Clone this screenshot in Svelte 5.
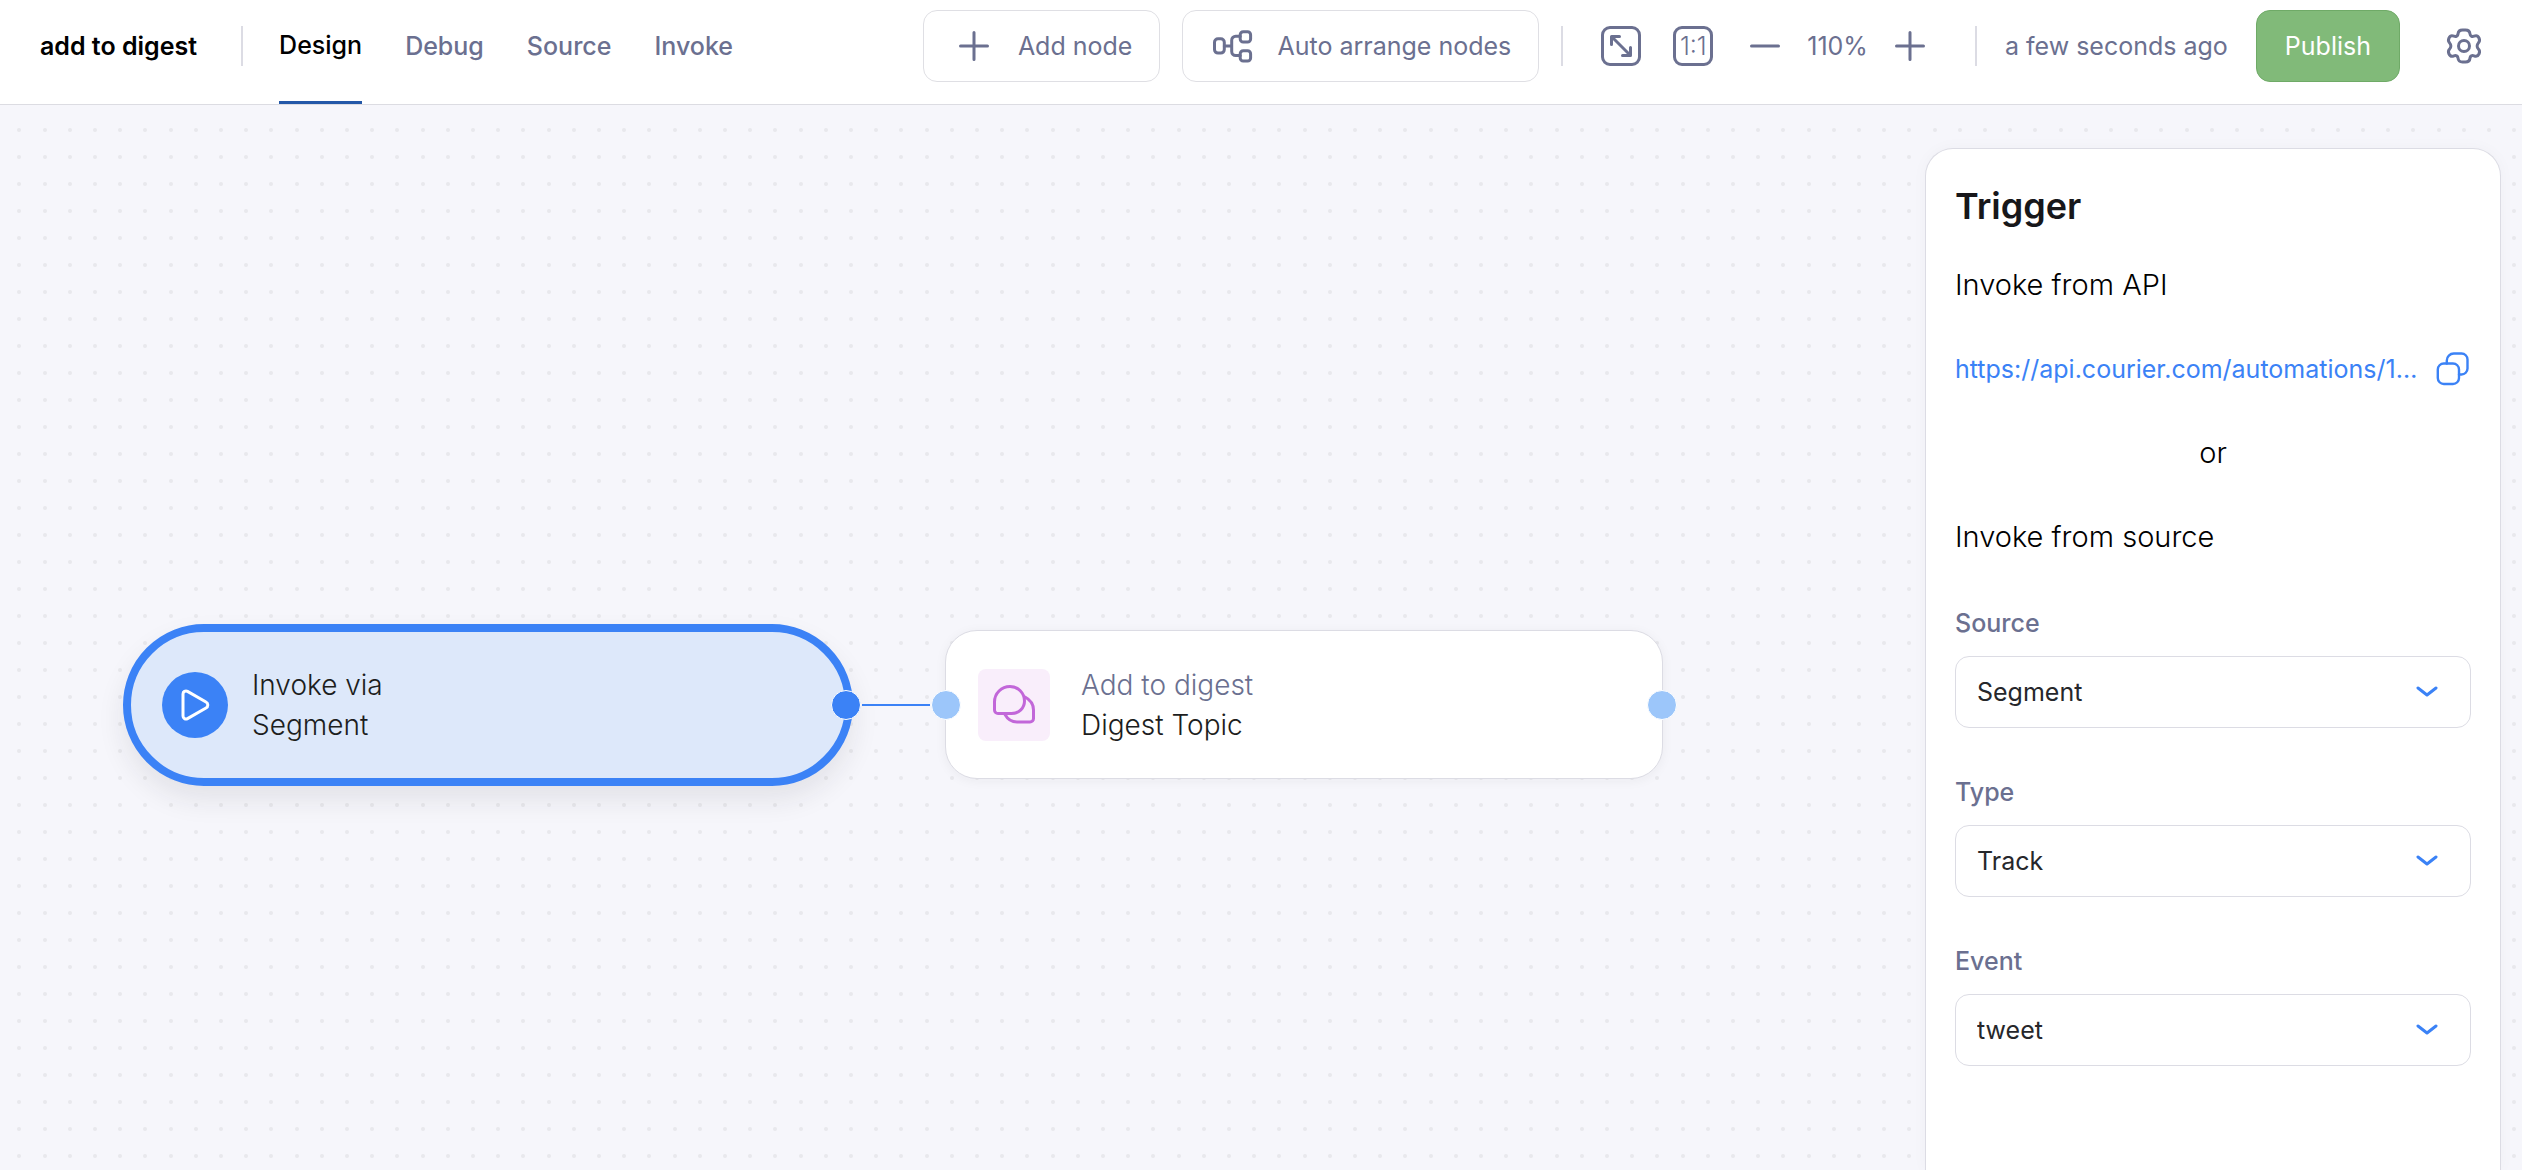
<script>
  const tabs = ['Design', 'Debug', 'Source', 'Invoke'];
  let active = $state('Design');

  const fields = [
    { id: 'source', label: 'Source', value: 'Segment' },
    { id: 'type', label: 'Type', value: 'Track' },
    { id: 'event', label: 'Event', value: 'tweet' }
  ];

  // Horizontal centres of the canvas dots within one pattern tile.
  const dots = [19, 45, 70, 95, 120];
</script>

<div class="app">
  <header>
    <h1>add to digest</h1>
    <span class="divider"></span>
    <nav>
      {#each tabs as tab}
        <button class="tab" class:active={tab === active} onclick={() => (active = tab)}>{tab}</button>
      {/each}
    </nav>

    <div class="actions">
      <button class="outlined">
        <svg class="i40" viewBox="0 0 40 40"><path d="M20 6.500v27M6.500 20h27" /></svg>
        Add node
      </button>
      <button class="outlined">
        <svg class="i40" viewBox="0 0 40 40">
          <rect x="1.500" y="12.700" width="9.800" height="14.400" rx="3.500" />
          <rect x="27.200" y="5.700" width="10.400" height="10.400" rx="3" />
          <rect x="27.200" y="24.700" width="10.400" height="10.400" rx="3" />
          <path d="M11.300 19.900h7.400M27.200 10.200h-4.500a4 4 0 0 0-4 4v11.300a4 4 0 0 0 4 4h4.500" />
        </svg>
        Auto arrange nodes
      </button>
    </div>

    <span class="divider"></span>

    <div class="zoom">
      <button class="icon" aria-label="Fit to screen">
        <svg class="i40" viewBox="0 0 40 40">
          <rect x="1.500" y="1.500" width="37" height="37" rx="7.500" />
          <path d="M11 11L29 29M10.500 18.500V10.500H18.500M21.500 29.500H29.500V21.500" />
        </svg>
      </button>
      <button class="icon actual">1:1</button>
      <button class="icon" aria-label="Zoom out">
        <svg class="i40" viewBox="0 0 40 40"><path d="M6.500 20h27" /></svg>
      </button>
      <span class="level">110%</span>
      <button class="icon" aria-label="Zoom in">
        <svg class="i40" viewBox="0 0 40 40"><path d="M20 6.500v27M6.500 20h27" /></svg>
      </button>
    </div>

    <span class="divider"></span>
    <span class="saved">a few seconds ago</span>
    <button class="publish">Publish</button>
    <button class="icon" aria-label="Settings">
      <svg class="i40" viewBox="0 0 40 40">
        <circle cx="20" cy="20" r="5.500" />
        <path d="M18.500 4h3c2.500 0 4.300 1.600 4.500 4c.2 2 2 3 4 2.200c2-.8 4-.3 5 1.800c1 2 .7 3.700-.8 5.200c-1.400 1.400-1.400 4.200 0 5.600c1.500 1.500 1.800 3.200.8 5.200c-1 2.100-3 2.600-5 1.800c-2-.8-3.800.2-4 2.200c-.2 2.400-2 4-4.500 4h-3c-2.500 0-4.300-1.600-4.500-4c-.2-2-2-3-4-2.200c-2 .8-4 .3-5-1.800c-1-2-.7-3.700.8-5.200c1.400-1.400 1.400-4.200 0-5.600c-1.500-1.500-1.800-3.200-.8-5.200c1-2.100 3-2.600 5-1.800c2 .8 3.800-.2 4-2.200c.2-2.400 2-4 4.500-4z" />
      </svg>
    </button>
  </header>

  <main>
    <section class="canvas" aria-label="Automation canvas">
      <svg class="grid" aria-hidden="true">
        <defs>
          <pattern id="dots" width="126" height="27" y="12" patternUnits="userSpaceOnUse">
            {#each dots as x}
              <circle cx={x} cy="13" r="2" />
            {/each}
          </pattern>
        </defs>
        <rect width="100%" height="100%" fill="url(#dots)" />
      </svg>

      <div class="node trigger">
        <span class="play">
          <svg viewBox="0 0 32 32"><path d="M4 5v22a3 3 0 0 0 4.500 2.600l18.500-10.600a3.400 3.400 0 0 0 0-6L8.500 2.400A3 3 0 0 0 4 5z" /></svg>
        </span>
        <p>Invoke via<br />Segment</p>
        <span class="handle out solid"></span>
      </div>

      <span class="edge"></span>

      <div class="node step">
        <span class="tile">
          <svg viewBox="0 0 48 48">
            <path d="M20 5.500a14.500 14.500 0 0 1 14.500 14.500c0 7-5.500 12.500-13 12.500H8a3.500 3.500 0 0 1-3.500-3.500V21A15.500 15.500 0 0 1 20 5.500z" />
            <path d="M35 16c5 2.600 8.500 7.500 8.500 13v8.500a3.500 3.500 0 0 1-3.500 3.500H27c-5.500 0-9.500-3-12-7.500" />
          </svg>
        </span>
        <p><span class="muted">Add to digest</span><br />Digest Topic</p>
        <span class="handle in"></span>
        <span class="handle out"></span>
      </div>
    </section>

    <aside>
      <h2>Trigger</h2>
      <p>Invoke from API</p>
      <div class="url">
        <a href="https://api.courier.com/automations/1">https://api.courier.com/automations/1…</a>
        <button class="icon copy" aria-label="Copy URL">
          <svg viewBox="0 0 36 36">
            <rect x="2.800" y="12.500" width="21.200" height="20.500" rx="6" />
            <path d="M11.800 12.500V9.500a7 7 0 0 1 7-7h7.700a6 6 0 0 1 6 6v9a6 6 0 0 1-6 6h-2.500" />
          </svg>
        </button>
      </div>
      <p class="or">or</p>
      <p>Invoke from source</p>
      <form>
        {#each fields as field}
          <div class="field">
            <label for={field.id}>{field.label}</label>
            <div class="select">
              <select id={field.id}><option>{field.value}</option></select>
              <svg viewBox="0 0 24 12"><path d="M3 2l9 7 9-7" /></svg>
            </div>
          </div>
        {/each}
      </form>
    </aside>
  </main>
</div>

<style>
  :global(body) {
    margin: 0;
  }
  .app {
    height: 100vh;
    display: flex;
    flex-direction: column;
    overflow: hidden;
    background: #f6f6fb;
    color: #000;
    font-family: Inter, 'Liberation Sans', sans-serif;
    font-size: 25px;
    line-height: 32px;
  }
  h1, h2, p {
    margin: 0;
  }
  button, select {
    font: inherit;
    color: inherit;
    margin: 0;
  }
  button {
    padding: 0;
    border: 0;
    background: none;
    white-space: nowrap;
    cursor: pointer;
  }
  svg {
    display: block;
    flex: none;
    fill: none;
    stroke: currentColor;
    stroke-width: 3;
    stroke-linecap: round;
    stroke-linejoin: round;
  }
  .i40 {
    width: 40px;
    height: 40px;
  }

  header {
    flex: none;
    box-sizing: border-box;
    height: 105px;
    display: flex;
    align-items: center;
    padding: 0 38px 12px 40px;
    border-bottom: 1px solid #dcdce2;
    background: #fff;
    color: #6b7090;
    white-space: nowrap;
  }
  h1 {
    font-size: 25px;
    font-weight: 600;
    color: #000;
  }
  .divider {
    flex: none;
    width: 2px;
    height: 40px;
    background: #dcdce4;
  }
  h1 + .divider {
    margin: 0 36px 0 44px;
  }
  nav {
    align-self: stretch;
    display: flex;
    gap: 43px;
    margin-bottom: -12px;
  }
  .tab {
    box-sizing: border-box;
    padding-bottom: 12px;
    font-weight: 500;
  }
  .tab.active {
    color: #000;
    padding-bottom: 11px;
    border-bottom: 3px solid #2458a8;
  }
  .actions {
    display: flex;
    gap: 22px;
    margin: 0 22px 0 auto;
  }
  .outlined {
    box-sizing: border-box;
    height: 72px;
    display: flex;
    align-items: center;
    gap: 24px;
    padding: 0 27px 0 30px;
    border: 1px solid #dfdfe4;
    border-radius: 14px;
    background: #fff;
  }
  .zoom {
    display: flex;
    align-items: center;
    gap: 32px;
    margin: 0 45px 0 38px;
  }
  .actual {
    box-sizing: border-box;
    width: 40px;
    height: 40px;
    border: 3px solid #6b7090;
    border-radius: 9px;
    font-weight: 300;
    line-height: 34px;
  }
  .level {
    margin: 0 -10px;
  }
  .saved {
    margin: 0 28px;
  }
  .publish {
    box-sizing: border-box;
    height: 72px;
    padding: 0 28px;
    margin-right: 44px;
    border: 1px solid #6faa67;
    border-radius: 14px;
    background: #81ba79;
    color: #fff;
  }

  main {
    flex: 1;
    min-height: 0;
    display: flex;
    position: relative;
  }
  .canvas {
    flex: 1;
    font-size: 28px;
    font-weight: 300;
    line-height: 40px;
    color: #1c1d20;
  }
  .grid {
    position: absolute;
    inset: 0;
    width: 100%;
    height: 100%;
    stroke: none;
  }
  .grid circle {
    fill: #e8e8ed;
  }
  .node {
    position: absolute;
    box-sizing: border-box;
    display: flex;
    align-items: center;
  }
  .trigger {
    left: 123px;
    top: 519px;
    width: 730px;
    height: 162px;
    padding-left: 31px;
    gap: 24px;
    border: 8px solid #3b82f6;
    border-radius: 81px;
    background: #dde8fa;
    box-shadow: 0 14px 28px rgba(30, 30, 40, 0.09);
  }
  .step {
    left: 945px;
    top: 525px;
    width: 718px;
    height: 149px;
    padding-left: 32px;
    gap: 31px;
    border: 1px solid #dcdce4;
    border-radius: 32px;
    background: #fff;
    box-shadow: 0 2px 12px rgba(30, 30, 40, 0.05);
  }
  .play {
    width: 66px;
    height: 66px;
    display: grid;
    place-items: center;
    border-radius: 50%;
    background: #3b82f6;
    color: #fff;
  }
  .play svg {
    width: 32px;
    height: 32px;
  }
  .tile {
    width: 72px;
    height: 72px;
    display: grid;
    place-items: center;
    border-radius: 8px;
    background: #f9eefb;
    color: #c267d9;
  }
  .tile svg {
    width: 48px;
    height: 48px;
  }
  .muted {
    color: #6b7090;
  }
  .handle {
    position: absolute;
    box-sizing: border-box;
    top: 50%;
    width: 30px;
    height: 30px;
    margin-top: -15px;
    border: 1px solid #fff;
    border-radius: 50%;
    background: #9cc6fa;
  }
  .handle.in {
    left: -15px;
  }
  .handle.out {
    right: -15px;
  }
  .handle.solid {
    background: #3b82f6;
    right: -16px;
  }
  .edge {
    position: absolute;
    left: 862px;
    top: 599px;
    width: 68px;
    height: 2px;
    background: #3b82f6;
  }

  aside {
    position: relative;
    box-sizing: border-box;
    width: 576px;
    margin: 43px 21px 0 0;
    padding: 35px 29px 0;
    border: 1px solid #dcdce4;
    border-bottom: 0;
    border-radius: 28px 28px 0 0;
    background: #fff;
    box-shadow: 0 0 16px rgba(30, 30, 40, 0.03);
  }
  h2 {
    font-size: 36px;
    line-height: 44px;
    font-weight: 600;
    color: #17171a;
    margin-bottom: 37px;
  }
  aside p {
    font-size: 29px;
    font-weight: 300;
    line-height: 40px;
  }
  .url {
    display: flex;
    align-items: center;
    justify-content: space-between;
    height: 40px;
    margin: 44px 0;
    color: #3b82f6;
  }
  a {
    color: inherit;
    text-decoration: none;
    white-space: nowrap;
  }
  .copy svg {
    width: 36px;
    height: 36px;
    stroke-width: 2.4;
  }
  .or {
    text-align: center;
    margin-bottom: 44px;
  }
  form {
    display: flex;
    flex-direction: column;
    gap: 48px;
    margin-top: 50px;
  }
  .field {
    display: flex;
    flex-direction: column;
    gap: 17px;
  }
  label {
    color: #6b7090;
    font-weight: 500;
  }
  .select {
    display: grid;
    align-items: center;
  }
  .select > * {
    grid-area: 1 / 1;
  }
  select {
    appearance: none;
    box-sizing: border-box;
    width: 100%;
    height: 72px;
    padding: 0 60px 0 21px;
    border: 1px solid #dcdce4;
    border-radius: 14px;
    background: #fff;
    color: #26272b;
  }
  .select svg {
    width: 24px;
    height: 12px;
    justify-self: end;
    margin-right: 32px;
    color: #3b82f6;
    pointer-events: none;
  }
</style>
